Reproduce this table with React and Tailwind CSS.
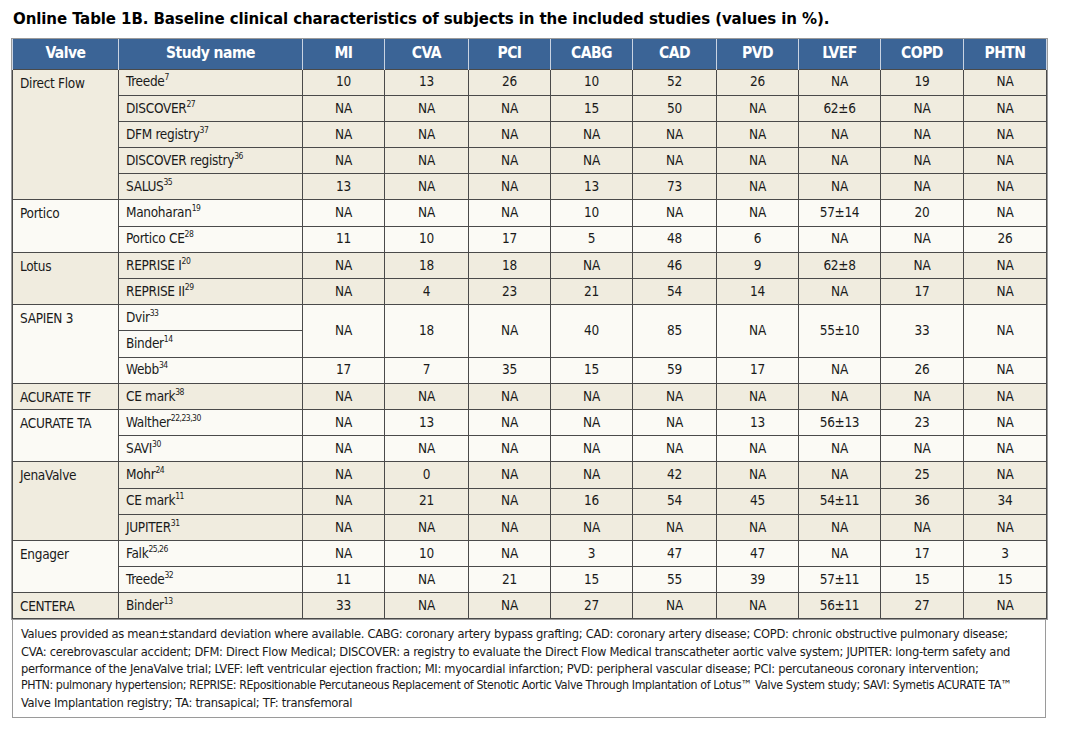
const cols = [106, 184, 82, 84, 82, 82, 84, 82, 82, 83, 83];
const heads = ["Valve", "Study name", "MI", "CVA", "PCI", "CABG", "CAD", "PVD", "LVEF", "COPD", "PHTN"];

const groups = [
  {
    valve: "Direct Flow",
    bg: "bg-[#f0ecdf]",
    rows: [
      ["Treede", "7", "10", "13", "26", "10", "52", "26", "NA", "19", "NA"],
      ["DISCOVER", "27", "NA", "NA", "NA", "15", "50", "NA", "62±6", "NA", "NA"],
      ["DFM registry", "37", "NA", "NA", "NA", "NA", "NA", "NA", "NA", "NA", "NA"],
      ["DISCOVER registry", "36", "NA", "NA", "NA", "NA", "NA", "NA", "NA", "NA", "NA"],
      ["SALUS", "35", "13", "NA", "NA", "13", "73", "NA", "NA", "NA", "NA"],
    ],
  },
  {
    valve: "Portico",
    bg: "bg-[#fbfaf5]",
    rows: [
      ["Manoharan", "19", "NA", "NA", "NA", "10", "NA", "NA", "57±14", "20", "NA"],
      ["Portico CE", "28", "11", "10", "17", "5", "48", "6", "NA", "NA", "26"],
    ],
  },
  {
    valve: "Lotus",
    bg: "bg-[#f0ecdf]",
    rows: [
      ["REPRISE I", "20", "NA", "18", "18", "NA", "46", "9", "62±8", "NA", "NA"],
      ["REPRISE II", "29", "NA", "4", "23", "21", "54", "14", "NA", "17", "NA"],
    ],
  },
  {
    valve: "SAPIEN 3",
    bg: "bg-[#fbfaf5]",
    merged: ["NA", "18", "NA", "40", "85", "NA", "55±10", "33", "NA"],
    rows: [
      ["Dvir", "33"],
      ["Binder", "14"],
      ["Webb", "34", "17", "7", "35", "15", "59", "17", "NA", "26", "NA"],
    ],
  },
  {
    valve: "ACURATE TF",
    bg: "bg-[#f0ecdf]",
    rows: [["CE mark", "38", "NA", "NA", "NA", "NA", "NA", "NA", "NA", "NA", "NA"]],
  },
  {
    valve: "ACURATE TA",
    bg: "bg-[#fbfaf5]",
    rows: [
      ["Walther", "22,23,30", "NA", "13", "NA", "NA", "NA", "13", "56±13", "23", "NA"],
      ["SAVI", "30", "NA", "NA", "NA", "NA", "NA", "NA", "NA", "NA", "NA"],
    ],
  },
  {
    valve: "JenaValve",
    bg: "bg-[#f0ecdf]",
    rows: [
      ["Mohr", "24", "NA", "0", "NA", "NA", "42", "NA", "NA", "25", "NA"],
      ["CE mark", "11", "NA", "21", "NA", "16", "54", "45", "54±11", "36", "34"],
      ["JUPITER", "31", "NA", "NA", "NA", "NA", "NA", "NA", "NA", "NA", "NA"],
    ],
  },
  {
    valve: "Engager",
    bg: "bg-[#fbfaf5]",
    rows: [
      ["Falk", "25,26", "NA", "10", "NA", "3", "47", "47", "NA", "17", "3"],
      ["Treede", "32", "11", "NA", "21", "15", "55", "39", "57±11", "15", "15"],
    ],
  },
  {
    valve: "CENTERA",
    bg: "bg-[#f0ecdf]",
    rows: [["Binder", "13", "33", "NA", "NA", "27", "NA", "NA", "56±11", "27", "NA"]],
  },
];

const font = { fontFamily: '"DejaVu Sans Condensed", "DejaVu Sans", "Liberation Sans", sans-serif' };

const cell = "border border-[#4a4a4a] text-center text-[13.5px] tracking-[-0.3px] leading-none p-0";

const App = () => {
  return (
    <div className="w-[1065px] h-[731px] bg-white text-[#1a1a1a] pl-3 pt-[9px] font-stretch-condensed" style={font}>
      <h1 className="text-[16.7px] font-bold leading-[19px] mb-[11px] pl-px text-black tracking-[-0.1px]">
        Online Table 1B. Baseline clinical characteristics of subjects in the included studies (values in %).
      </h1>

      <table className="border-collapse table-fixed w-[1034px] outline outline-1 outline-[#9a9a9a]">
        <colgroup>
          {cols.map((w, i) => (
            <col key={i} style={{ width: w }} />
          ))}
        </colgroup>
        <thead>
          <tr className="h-[30px] bg-[#3b6496] text-white">
            {heads.map((h) => (
              <th key={h} className="border-x border-[#c9d3e2] text-[15.5px] tracking-[-0.5px] font-bold p-0">
                {h}
              </th>
            ))}
          </tr>
        </thead>
        <tbody>
          {groups.map((g) =>
            g.rows.map((r, ri) => (
              <tr key={g.valve + ri} className={`h-[26.2px] ${g.bg}`}>
                {ri === 0 && (
                  <td rowSpan={g.rows.length} className="border border-[#4a4a4a] align-top text-left text-[13.5px] tracking-[-0.3px] leading-none pl-[7px] pt-[7px]">
                    {g.valve}
                  </td>
                )}
                <td className="border border-[#4a4a4a] text-left text-[13.5px] tracking-[-0.3px] leading-none pl-[7px]">
                  {r[0]}
                  <sup className="text-[8.5px] -top-[6px] tracking-[-0.5px]">{r[1]}</sup>
                </td>
                {g.merged && ri === 0 &&
                  g.merged.map((v, i) => (
                    <td key={i} rowSpan={2} className={cell}>{v}</td>
                  ))}
                {!(g.merged && ri < 2) &&
                  r.slice(2).map((v, i) => (
                    <td key={i} className={cell}>{v}</td>
                  ))}
              </tr>
            ))
          )}
        </tbody>
      </table>

      {/* Footnotes */}
      <div className="w-[1034px] border border-t-0 border-[#9a9a9a] pl-2 pt-[6px] pb-[6px] text-[12.8px] tracking-[-0.3px] leading-[17.2px] text-[#1a1a1a] whitespace-nowrap">
        <div>Values provided as mean±standard deviation where available. CABG: coronary artery bypass grafting; CAD: coronary artery disease; COPD: chronic obstructive pulmonary disease;</div>
        <div>CVA: cerebrovascular accident; DFM: Direct Flow Medical; DISCOVER: a registry to evaluate the Direct Flow Medical transcatheter aortic valve system; JUPITER: long-term safety and</div>
        <div>performance of the JenaValve trial; LVEF: left ventricular ejection fraction; MI: myocardial infarction; PVD: peripheral vascular disease; PCI: percutaneous coronary intervention;</div>
        <div className="text-[12.3px] tracking-[-0.4px]">PHTN: pulmonary hypertension; REPRISE: REpositionable Percutaneous Replacement of Stenotic Aortic Valve Through Implantation of Lotus™ Valve System study; SAVI: Symetis ACURATE TA™</div>
        <div>Valve Implantation registry; TA: transapical; TF: transfemoral</div>
      </div>
    </div>
  );
};

export default App;
